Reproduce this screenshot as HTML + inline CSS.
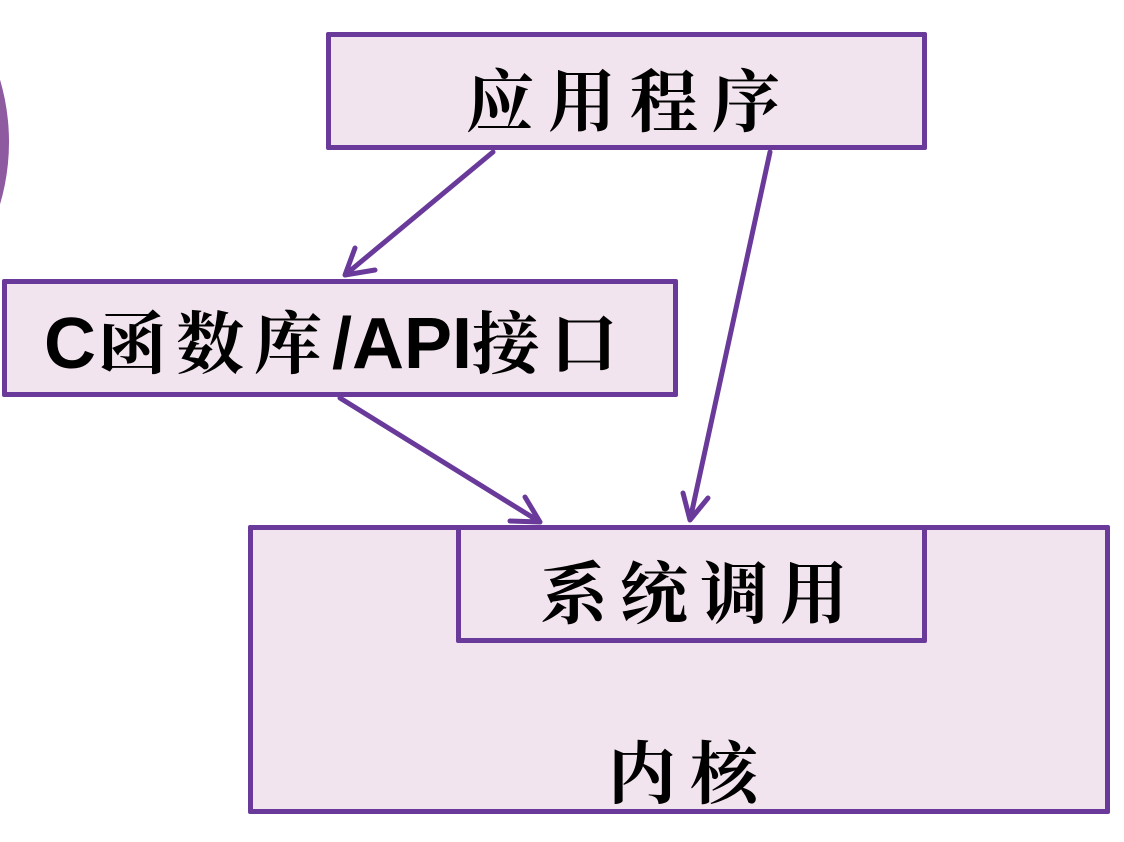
<!DOCTYPE html>
<html><head><meta charset="utf-8"><style>
html,body{margin:0;padding:0;background:#fff;}
body{width:1124px;height:842px;position:relative;overflow:hidden;font-family:"Liberation Sans","Noto Serif CJK SC",serif;}
.b{position:absolute;box-sizing:border-box;border:5px solid #6a3a9b;background:#f2e4ee;border-radius:2px;}
.t{position:absolute;font-family:"Noto Serif CJK SC","Noto Sans CJK SC",serif;font-weight:700;color:#000;font-size:68px;line-height:1;white-space:nowrap;letter-spacing:14px;}
</style></head><body>
<div style="position:absolute;left:-433px;top:-79px;width:442px;height:442px;border-radius:50%;background:#8e5aa0;"></div>
<div class="b" style="left:326px;top:32px;width:601px;height:118px;"></div>
<div class="b" style="left:2px;top:279px;width:676px;height:118px;"></div>
<div class="b" style="left:248px;top:525px;width:862px;height:289px;"></div>
<div class="b" style="left:456px;top:525px;width:471px;height:118px;"></div>
<div class="t" style="left:466px;top:64px;">应用程序</div>
<div class="t" style="left:44px;top:306px;letter-spacing:10px;"><span style="font-family:'Liberation Sans',sans-serif;font-size:72px;letter-spacing:2px">C</span>函数库<span style="font-family:'Liberation Sans',sans-serif;font-size:72px;letter-spacing:0">/API</span>接口</div>
<div class="t" style="left:540px;top:556px;letter-spacing:12px;">系统调用</div>
<div class="t" style="left:608px;top:736px;">内核</div>
<svg width="1124" height="842" style="position:absolute;left:0;top:0" fill="none" stroke="#6a3a9b" stroke-width="5" stroke-linecap="round" stroke-linejoin="round">
<path d="M493 152 L345 275 M355 248 L345 275 L375 270"/>
<path d="M770 152 L690 520 M683 493 L690 520 L708 498"/>
<path d="M340 398 L540 522 M510 521 L540 522 L525 497"/>
</svg>
</body></html>
